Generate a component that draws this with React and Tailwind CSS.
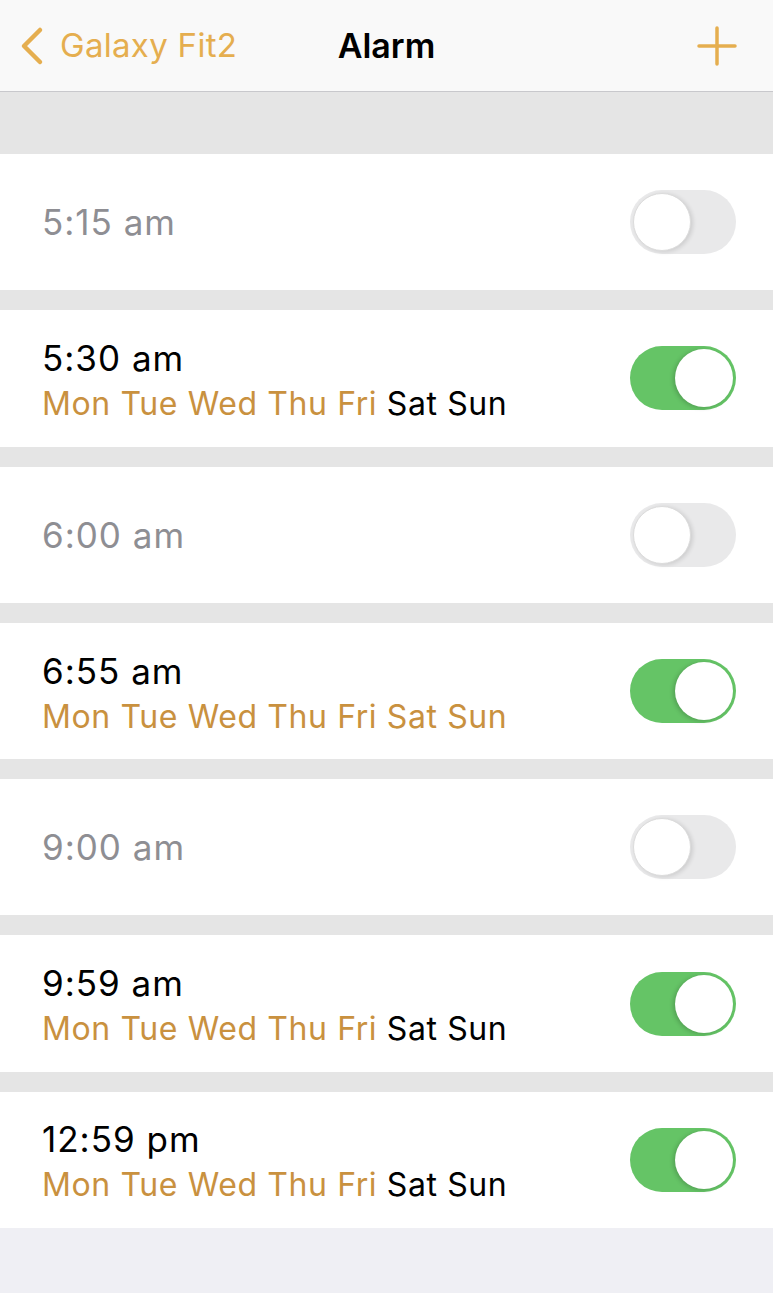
import React from 'react';

const alarms = [
  { time: '5:15 am', on: false },
  { time: '5:30 am', on: true, weekend: false },
  { time: '6:00 am', on: false },
  { time: '6:55 am', on: true, weekend: true },
  { time: '9:00 am', on: false },
  { time: '9:59 am', on: true, weekend: false },
  { time: '12:59 pm', on: true, weekend: false },
];

function Toggle({ on }) {
  if (on) {
    return (
      <div className="flex h-[64px] w-[106px] items-center justify-end rounded-full bg-[#65c466] px-[3px]">
        <div className="h-[58px] w-[58px] rounded-full bg-white shadow-[-2px_1px_4px_rgba(0,0,0,0.18)]" />
      </div>
    );
  }
  return (
    <div className="flex h-[64px] w-[106px] items-center justify-start rounded-full bg-[#e9e9ea] px-[3px]">
      <div className="h-[58px] w-[58px] rounded-full border border-[#dcdcdc] bg-white shadow-[2px_1px_4px_rgba(0,0,0,0.12)]" />
    </div>
  );
}

function AlarmRow({ alarm }) {
  return (
    <div className="flex h-[136.3px] items-center justify-between bg-white pl-[42px] pr-[37px]">
      <div className={`flex flex-col ${alarm.on ? 'pt-[5px]' : ''}`}>
        <span
          className={`text-[35px] leading-[46px] tracking-[1px] ${alarm.on ? 'text-black' : 'text-[#8e8e93]'}`}
        >
          {alarm.time}
        </span>
        {alarm.on && (
          <span className="text-[32px] leading-[46px] tracking-[0.6px]">
            <span className="text-[#c9913f]">Mon Tue Wed Thu Fri</span>{' '}
            <span className={alarm.weekend ? 'text-[#c9913f]' : 'text-black'}>Sat Sun</span>
          </span>
        )}
      </div>
      <Toggle on={alarm.on} />
    </div>
  );
}

export default function App() {
  return (
    <div
      className="flex min-h-[1293px] w-full flex-col bg-[#efeff4]"
      style={{ fontFamily: 'Inter, "Noto Sans", sans-serif' }}
    >
      <div className="relative flex h-[92px] items-center justify-between border-b border-[#c8c8cc] bg-[#f9f9f9] pl-[18px] pr-[36px]">
        <div className="flex items-center gap-[16px] text-[#e5ae4f]">
          <svg width="26" height="40" viewBox="0 0 26 40" fill="none">
            <path d="M22 4L6 20l16 16" stroke="#e5ae4f" strokeWidth="4.5" strokeLinecap="round" strokeLinejoin="round" />
          </svg>
          <span className="text-[33px] tracking-[0.3px]">Galaxy Fit2</span>
        </div>
        <span className="absolute left-1/2 -translate-x-1/2 text-[34px] font-semibold text-black">
          Alarm
        </span>
        <svg width="40" height="40" viewBox="0 0 40 40" fill="none">
          <path d="M20 2v36M2 20h36" stroke="#e5ae4f" strokeWidth="3.5" strokeLinecap="round" />
        </svg>
      </div>
      <div className="flex flex-col gap-[20px] bg-[#e5e5e5] pt-[62px]">
        {alarms.map((a) => (
          <AlarmRow key={a.time} alarm={a} />
        ))}
      </div>
    </div>
  );
}
